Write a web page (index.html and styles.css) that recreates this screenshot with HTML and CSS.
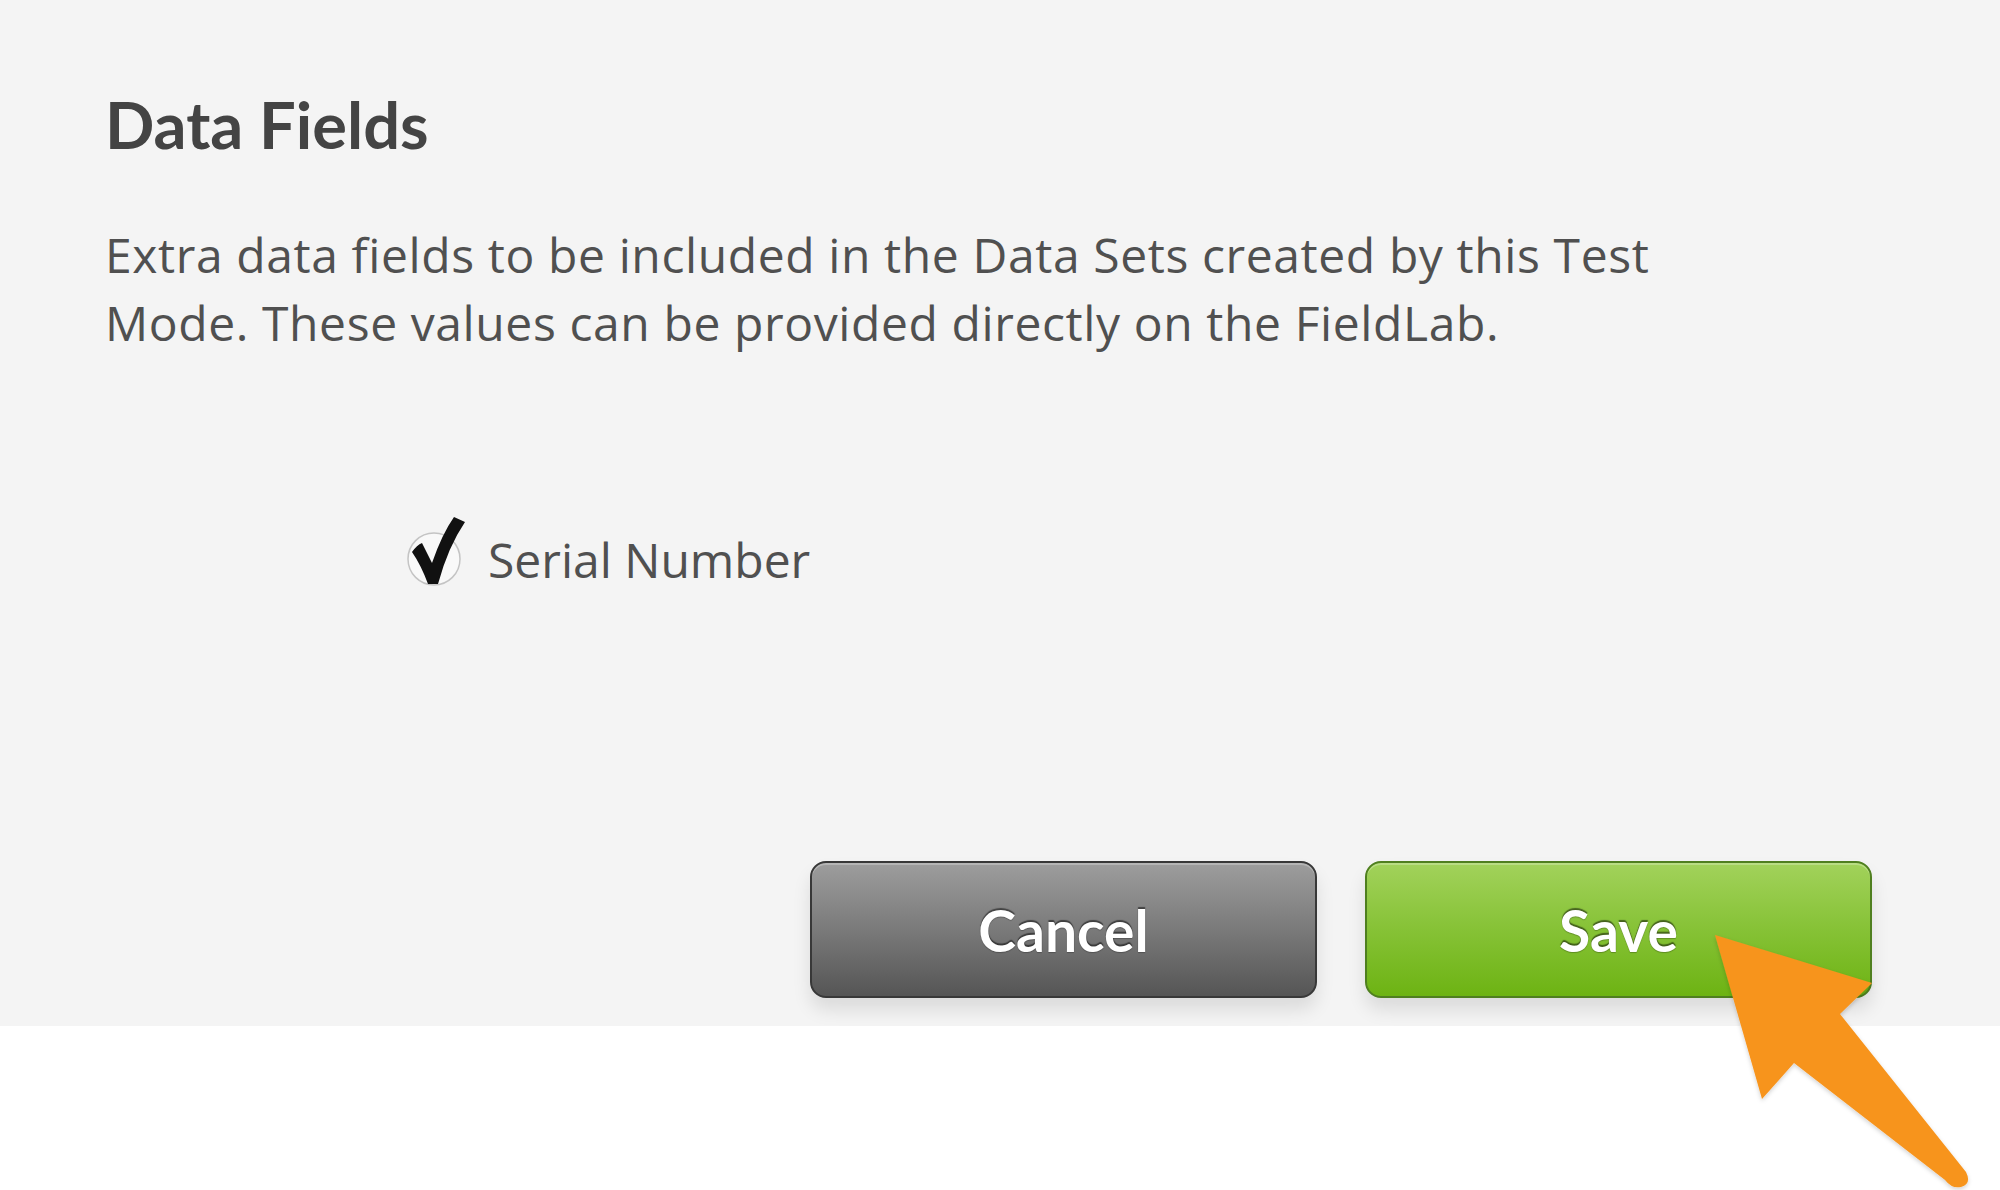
FILE: index.html
```html
<!DOCTYPE html>
<html lang="en">
<head>
<meta charset="utf-8">
<title>Data Fields</title>
<link rel="stylesheet" href="styles.css">
</head>
<body>
<main class="panel">
  <h2 class="title">Data Fields</h2>
  <p class="desc">Extra data fields to be included in the Data Sets created by this Test<br>Mode. These values can be provided directly on the FieldLab.</p>
  <label class="field">
    <svg class="check" viewBox="400 515 70 77" width="70" height="77" aria-hidden="true">
      <circle cx="434" cy="560" r="26" fill="#f9f9f9" stroke="#c4c4c4" stroke-width="1.5"/>
      <path d="M412,553 Q417,546 422,544 L432,564 Q442,535 454,518 L465,523 Q448,548 438,585 L428,585 Q421,566 412,553 Z" fill="#111"/>
    </svg>
    <span class="field-label">Serial Number</span>
  </label>
  <div class="actions">
    <button class="btn btn-cancel" type="button">Cancel</button>
    <button class="btn btn-save" type="button">Save</button>
  </div>
</main>
<svg class="pointer" viewBox="1700 920 290 270" width="290" height="270" aria-hidden="true">
  <defs>
    <filter id="sh" x="-10%" y="-10%" width="120%" height="120%">
      <feDropShadow dx="0" dy="2" stdDeviation="2" flood-color="#000" flood-opacity="0.18"/>
    </filter>
  </defs>
  <path d="M1715,935 L1872,983 L1840,1014 L1966,1172 Q1972,1184 1961,1187 Q1952,1189 1945,1180 L1794,1063 L1762,1099 Z" fill="#f7941e" filter="url(#sh)"/>
</svg>
</body>
</html>
```

FILE: styles.css
```css
html, body {
  margin: 0;
  padding: 0;
  background: #ffffff;
}

body {
  width: 2000px;
  height: 1190px;
  overflow: hidden;
  position: relative;
  font-family: "Open Sans", "Noto Sans", sans-serif;
}

.panel {
  background: #f4f4f4;
  padding: 85px 128px 28px 105px;
}

.title {
  margin: 0;
  font-family: "Lato", "Open Sans", sans-serif;
  font-weight: 700;
  font-size: 65px;
  line-height: 78px;
  color: #444444;
}

.desc {
  margin: 58px 0 0 0;
  font-size: 48px;
  line-height: 68px;
  letter-spacing: 0.6px;
  color: #505050;
}

.field {
  display: flex;
  align-items: flex-start;
  margin: 157px 0 0 295px;
}

.check {
  display: block;
  flex: none;
}

.field-label {
  margin: 13px 0 0 18px;
  font-size: 48px;
  line-height: 1.362;
  color: #505050;
}

.actions {
  display: flex;
  justify-content: flex-end;
  gap: 48px;
  margin-top: 269px;
}

.btn {
  width: 507px;
  height: 137px;
  border-radius: 16px;
  font-family: "Lato", "Open Sans", sans-serif;
  font-weight: 700;
  font-size: 57px;
  line-height: 1.2;
  color: #ffffff;
  display: flex;
  align-items: center;
  justify-content: center;
  padding: 0;
  cursor: pointer;
  text-shadow: 0 -2px 1px rgba(0, 0, 0, 0.5), 0 1px 1px rgba(0, 0, 0, 0.25);
}

.btn-cancel {
  border: 2px solid #383838;
  background: linear-gradient(#9d9d9d, #7a7a7a 50%, #555555);
  box-shadow: inset 0 2px 0 rgba(255, 255, 255, 0.25), 0 12px 18px rgba(0, 0, 0, 0.10);
}

.btn-save {
  border: 2px solid #4f7f1f;
  background: linear-gradient(#a2d25b, #86c236 50%, #6db313);
  box-shadow: inset 0 2px 0 rgba(255, 255, 255, 0.25), 0 12px 18px rgba(0, 0, 0, 0.10);
}

.pointer {
  position: absolute;
  left: 1700px;
  top: 920px;
}
```
